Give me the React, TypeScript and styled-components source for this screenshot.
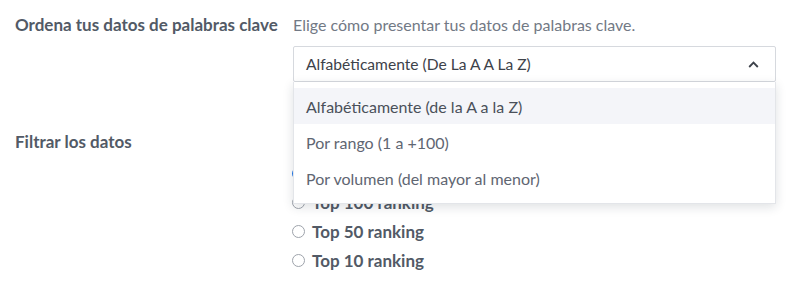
import styled, { createGlobalStyle } from "styled-components";

const GlobalStyle = createGlobalStyle`
  body {
    margin: 0;
    background: #ffffff;
    font-family: Lato, "Open Sans", sans-serif;
  }
`;

const Page = styled.div`
  padding: 15px 15px 0 15px;
  display: flex;
  flex-direction: column;
  gap: 50px;
`;

const Row = styled.div`
  display: grid;
  grid-template-columns: 278px 483px;
  align-items: start;
`;

const Label = styled.div`
  font-size: 17px;
  line-height: 20px;
  font-weight: 700;
  color: #525a66;
`;

const Content = styled.div`
  display: flex;
  flex-direction: column;
  position: relative;
`;

const Description = styled.div`
  font-size: 16px;
  line-height: 20px;
  color: #727985;
  margin-bottom: 11px;
`;

const SelectBox = styled.div`
  box-sizing: border-box;
  height: 36px;
  border: 1px solid #d6d9de;
  border-radius: 2px;
  display: flex;
  align-items: center;
  justify-content: space-between;
  padding: 0 16px 0 12px;
  font-size: 15.6px;
  color: #3d424a;
  background: #fff;
`;

const Menu = styled.ul`
  position: absolute;
  top: 67px;
  left: 0;
  right: 0;
  margin: 0;
  padding: 6px 0 7px;
  list-style: none;
  background: #fff;
  border: 1px solid #e3e5e9;
  border-top: none;
  box-shadow: 0 3px 10px rgba(30, 40, 60, 0.14);
  z-index: 2;
`;

const MenuItem = styled.li<{ $active?: boolean }>`
  height: 36px;
  display: flex;
  align-items: center;
  padding: 0 12px;
  font-size: 16px;
  color: ${(p) => (p.$active ? "#4a505a" : "#5f6672")};
  background: ${(p) => (p.$active ? "#f4f5f9" : "transparent")};
`;

const RadioList = styled.div`
  display: flex;
  flex-direction: column;
  padding-top: 27px;
  margin-left: -1px;
`;

const RadioRow = styled.label`
  height: 29px;
  display: flex;
  align-items: center;
  gap: 7px;
  font-size: 17px;
  font-weight: 700;
  color: #525a66;
`;

const RadioDot = styled.span<{ $checked?: boolean }>`
  box-sizing: border-box;
  width: 13px;
  height: 13px;
  border-radius: 50%;
  border: ${(p) => (p.$checked ? "4px solid #1a73e8" : "1px solid #9ea3ab")};
  background: #fff;
  flex: none;
`;

const options = [
  "Alfabéticamente (de la A a la Z)",
  "Por rango (1 a +100)",
  "Por volumen (del mayor al menor)",
];

// the first option sits under the open menu, only its dot edge shows
const radios = ["", "Top 100 ranking", "Top 50 ranking", "Top 10 ranking"];

export default function App() {
  return (
    <>
      <GlobalStyle />
      <Page>
        <Row>
          <Label>Ordena tus datos de palabras clave</Label>
          <Content>
            <Description>Elige cómo presentar tus datos de palabras clave.</Description>
            <SelectBox>
              <span>Alfabéticamente (De La A A La Z)</span>
              <svg width="11" height="7" viewBox="0 0 11 7">
                <polyline
                  points="1.2,6 5.5,1.6 9.8,6"
                  fill="none"
                  stroke="#3d424a"
                  strokeWidth="1.8"
                />
              </svg>
            </SelectBox>
            <Menu>
              {options.map((o, i) => (
                <MenuItem key={o} $active={i === 0}>
                  {o}
                </MenuItem>
              ))}
            </Menu>
          </Content>
        </Row>
        <Row>
          <Label>Filtrar los datos</Label>
          <RadioList>
            {radios.map((r, i) => (
              <RadioRow key={i}>
                <RadioDot $checked={i === 0} />
                {r}
              </RadioRow>
            ))}
          </RadioList>
        </Row>
      </Page>
    </>
  );
}
